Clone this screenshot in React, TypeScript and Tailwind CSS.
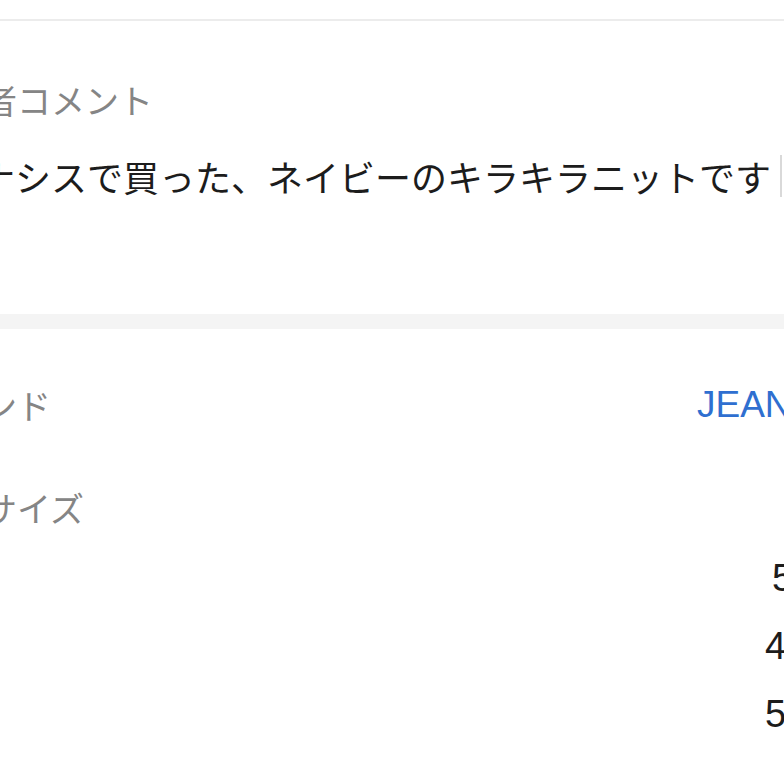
import React from "react";

const jp = "font-['Noto_Sans_CJK_JP','Noto_Sans',sans-serif]";
const lat = "font-['Liberation_Sans','Noto_Sans_CJK_JP',sans-serif]";

export default function App() {
  return (
    <div className="w-[784px] h-[784px] overflow-hidden bg-white">
      <div className="h-[19px] bg-white" />
      <div className="h-[2px] bg-[#ececec]" />
      <div className="ml-[-93px] w-[980px]">
        <section className="flex flex-col pt-[59px] pb-[117px]">
          <div className={`${jp} pl-[8px] text-[34px] leading-[40px] text-[#858585] whitespace-nowrap`}>
            出品者コメント
          </div>
          <div className={`${jp} mt-[35px] text-[36px] leading-[40px] text-[#1c1c1c] whitespace-nowrap flex items-center`}>
            <span>ジーナシスで買った、ネイビーのキラキラニットです</span>
            <span className="ml-[9px] inline-block w-[2px] h-[42px] bg-[#d9d9d9]" />
          </div>
        </section>
      </div>
      <div className="h-[15px] bg-[#f4f4f4]" />
      <div className="ml-[-93px] w-[1000px]">
        <section className="flex flex-col pt-[56px]">
          <div className="flex items-center h-[40px] whitespace-nowrap">
            <div className={`${jp} pl-[8px] w-[790px] text-[34px] leading-[40px] text-[#858585]`}>
              ブランド
            </div>
            <div className={`${lat} text-[37px] leading-[40px] text-[#2f6fd0]`}>JEANASIS</div>
          </div>
          <div className={`${jp} mt-[63px] pl-[8px] text-[34px] leading-[40px] text-[#858585] whitespace-nowrap`}>
            着用サイズ
          </div>
          <div className={`${lat} mt-[30px] flex flex-col gap-[28px] text-[38px] leading-[40px] text-[#1c1c1c] whitespace-nowrap`}>
            <div className="pl-[865px]">5 cm</div>
            <div className="pl-[858px]">45 cm</div>
            <div className="pl-[858px]">52 cm</div>
          </div>
        </section>
      </div>
    </div>
  );
}
